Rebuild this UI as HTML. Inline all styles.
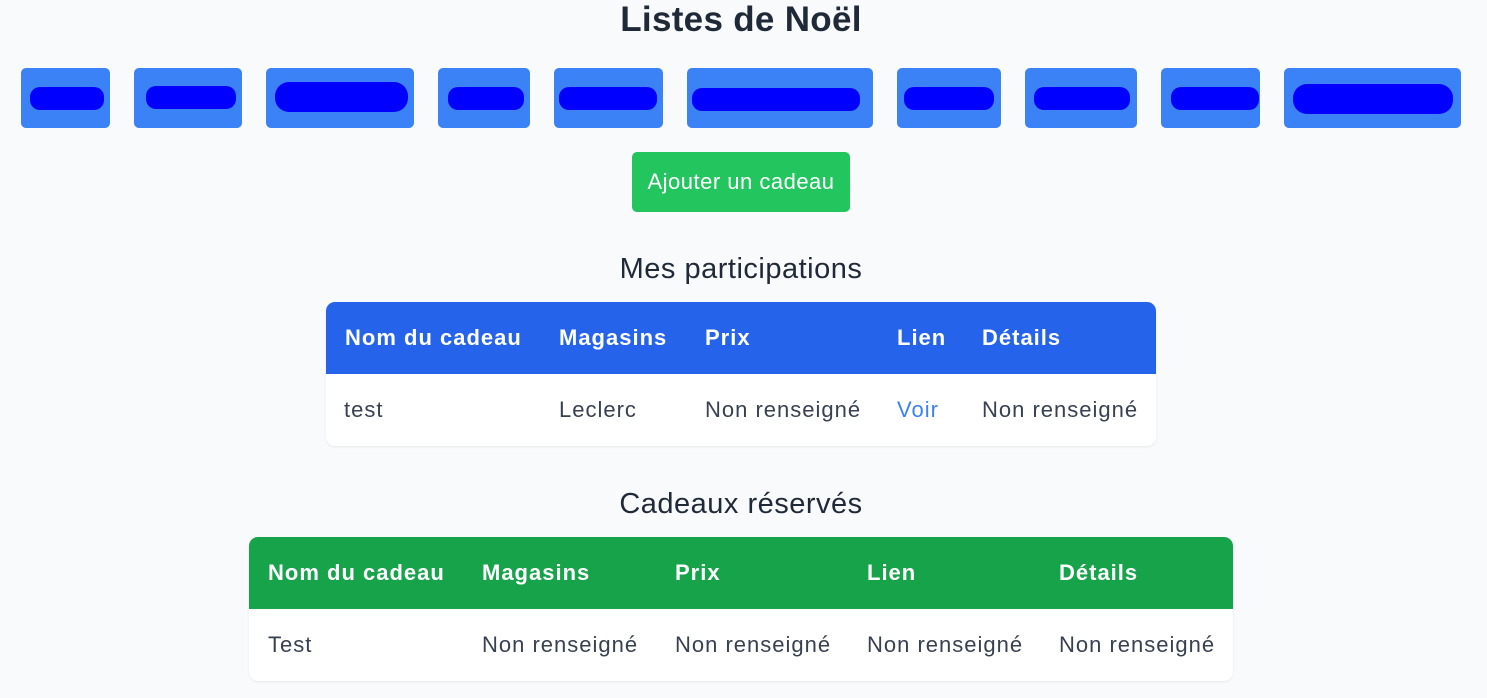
<!DOCTYPE html>
<html><head><meta charset="utf-8"><style>
body{margin:0;width:1487px;height:698px;background:#f8fafc;font-family:"Liberation Sans",sans-serif;color:#1f2937;position:relative;overflow:hidden}
h1{position:absolute;top:0;left:0;width:1482px;text-align:center;margin:0;font-size:35px;line-height:40px;font-weight:bold;color:#1f2937;letter-spacing:0.3px}
.b{position:absolute;top:68px;height:60px;background:#3b82f6;border-radius:5px}
.s{position:absolute;background:#0000ff;border-radius:10px;height:23px;top:19px}
.g{position:absolute;left:632px;top:152px;width:218px;height:60px;background:#22c55e;border-radius:5px;color:#fff;font-size:22px;letter-spacing:0.5px;line-height:60px;text-align:center}
.h2{position:absolute;left:0;width:1482px;text-align:center;font-size:29px;letter-spacing:0.5px;line-height:32px;color:#1f2937}
.t{position:absolute;border-radius:9px;overflow:hidden;background:#fff;box-shadow:0 1px 2px rgba(0,0,0,.08)}
.hd,.rw{position:relative;height:72px}
.hd span,.rw span{position:absolute;top:0;line-height:72px;font-size:22px;letter-spacing:1px;white-space:nowrap}
.hd span{color:#fff;font-weight:bold;letter-spacing:1px}
.rw span{color:#374151}
</style></head><body>
<h1>Listes de Noël</h1>
<div class="b" style="left:21px;width:89px"><div class="s" style="left:9px;width:74px"></div></div>
<div class="b" style="left:134px;width:108px"><div class="s" style="left:12px;width:90px;top:18px"></div></div>
<div class="b" style="left:266px;width:148px"><div class="s" style="left:9px;width:133px;top:14px;height:30px;border-radius:14px"></div></div>
<div class="b" style="left:438px;width:92px"><div class="s" style="left:10px;width:76px"></div></div>
<div class="b" style="left:554px;width:109px"><div class="s" style="left:5px;width:98px"></div></div>
<div class="b" style="left:687px;width:186px"><div class="s" style="left:5px;width:168px;top:20px"></div></div>
<div class="b" style="left:897px;width:104px"><div class="s" style="left:7px;width:90px"></div></div>
<div class="b" style="left:1025px;width:112px"><div class="s" style="left:9px;width:96px"></div></div>
<div class="b" style="left:1161px;width:99px"><div class="s" style="left:10px;width:88px"></div></div>
<div class="b" style="left:1284px;width:177px"><div class="s" style="left:9px;width:160px;top:16px;height:30px;border-radius:14px"></div></div>
<div class="g">Ajouter un cadeau</div>
<div class="h2" style="top:253px">Mes participations</div>
<div class="t" style="left:326px;top:302px;width:830px">
<div class="hd" style="background:#2563eb"><span style="left:19px">Nom du cadeau</span><span style="left:233px">Magasins</span><span style="left:379px">Prix</span><span style="left:571px">Lien</span><span style="left:656px">Détails</span></div>
<div class="rw"><span style="left:18px">test</span><span style="left:233px">Leclerc</span><span style="left:379px">Non renseigné</span><span style="left:571px;color:#3b82f6">Voir</span><span style="left:656px">Non renseigné</span></div>
</div>
<div class="h2" style="top:488px">Cadeaux réservés</div>
<div class="t" style="left:249px;top:537px;width:984px;height:144px">
<div class="hd" style="background:#16a34a"><span style="left:19px">Nom du cadeau</span><span style="left:233px">Magasins</span><span style="left:426px">Prix</span><span style="left:618px">Lien</span><span style="left:810px">Détails</span></div>
<div class="rw"><span style="left:19px">Test</span><span style="left:233px">Non renseigné</span><span style="left:426px">Non renseigné</span><span style="left:618px">Non renseigné</span><span style="left:810px">Non renseigné</span></div>
</div>
</body></html>
